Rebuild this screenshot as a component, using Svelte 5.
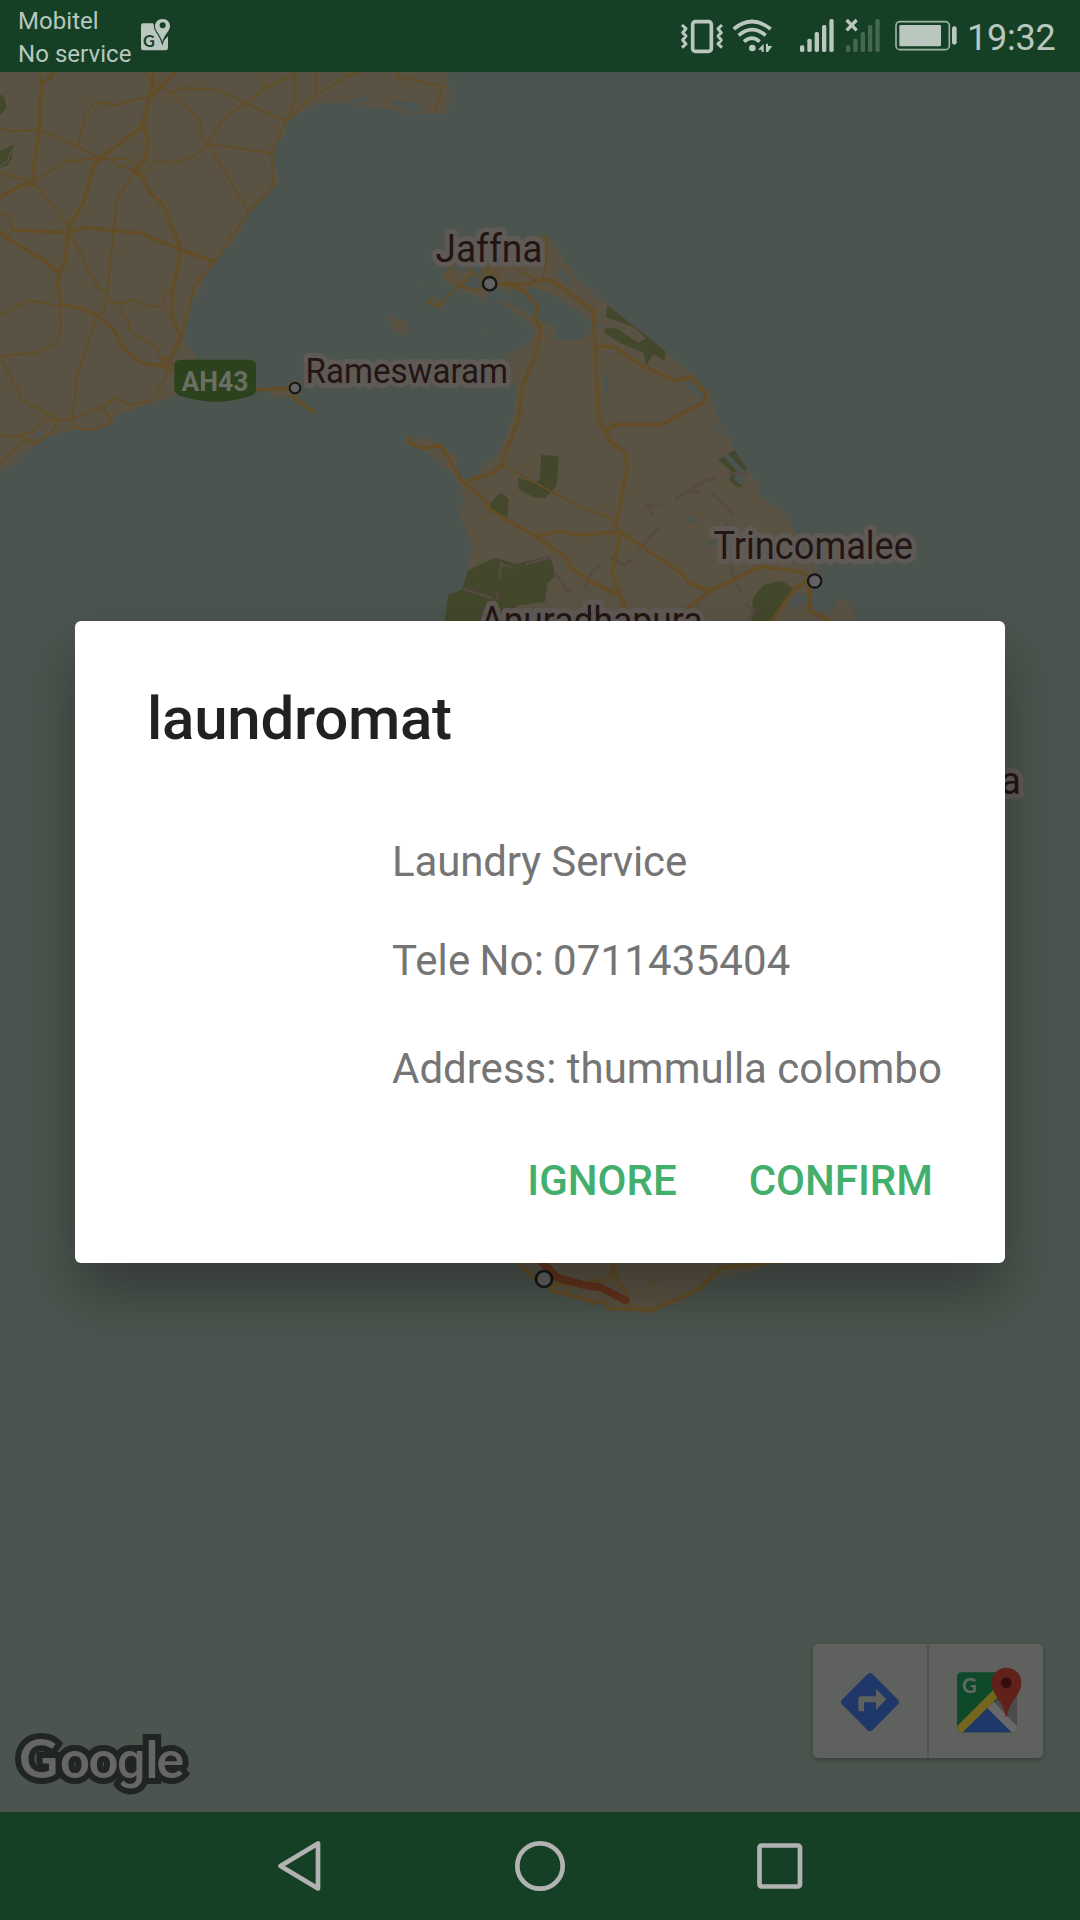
<script>
  // Road geometry, grouped by map tile. Each tile uses its own local units.
  const indiaMinor = [
    'M118 0L125 38', 'M0 172L30 184L112 179L235 229L300 266L385 266L412 292',
    'M235 225L254 138L284 97L348 105L425 83L447 88', 'M425 0L460 42L478 42L507 67L598 146L608 207L624 221L585 256L509 281L466 268L437 302L405 303L350 285L333 268',
    'M507 67L562 53L656 61L736 98L858 154', 'M624 221L666 150L736 98L795 56L885 12L882 0', 'M790 18L795 56',
    'M883 5L883 98L858 154L815 249L819 353L745 427L644 575L583 648L545 800', 'M858 154L918 98L946 78L1040 18L1085 5', 'M951 0L946 78', 'M1036 0L1040 18',
    'M1195 0L1190 20L1327 49L1306 131', 'M624 221L815 249', 'M624 221L745 427', 'M0 307L95 336L202 272L300 266', 'M95 336L116 355L205 465',
    'M0 428L26 434L38 478L22 502', 'M405 303L350 393L341 480L320 688L309 730L290 736L232 910L217 1046L222 1073L282 1080L337 1054L307 1010',
    'M208 492L253 568L266 606L280 622L291 650L320 669', 'M320 688L341 702L369 700L396 687L430 706L484 711L496 663L517 661', 'M369 700L365 730L381 740L388 780L430 807L476 843L486 880',
    'M0 736L84 691L182 708L183 772L170 824L97 850L0 857L68 992L175 1050L217 1046L307 1010L343 986L391 1005L457 992L500 914L520 902',
    'M175 1050L133 1050L99 1086L44 1102L0 1093', 'M175 1050L154 1088L107 1122L72 1104L14 1168L0 1175', 'M486 880L495 862L515 875L520 895L498 899'
  ];
  const indiaMajor = [
    'M165 0L145 28L125 38L118 180L95 336L98 343L65 344L0 382', 'M460 0L458 42L447 88L427 168L300 266L282 284L249 402L208 465L205 492L195 580L178 610L173 645L184 702L248 717L290 736L340 778L370 836L427 880L500 890L543 800L516 740L518 661L543 540L490 405L450 367L427 320L405 303L435 270L444 208L427 168',
    'M530 0L447 88', 'M38 480L205 488L249 473L425 490L543 540L644 575', 'M0 486L22 505L129 569L178 610', 'M767 959L880 955L882 984L944 1028'
  ];
  const lankaMinor = [
    'M228 155L198 190L240 228L298 243L308 220', 'M135 272L173 290L284 185', 'M484 80H502L495 180L480 240', 'M260 170L315 218L302 168', 'M315 218L326 115L330 218L350 168', 'M330 218L382 168',
    'M408 168L425 188L470 208', 'M364 765L460 815L590 887L680 918L712 955'
  ];
  const lankaMajor = [
    'M345 222L450 223L468 210H515L640 303L656 628L688 690L735 731L742 770L708 945L720 970L696 1093L730 1180V1240',
    'M380 222L435 245L474 293L465 325L484 355L467 433L427 530L414 632L363 764L336 790L248 817L182 706L131 715L88 700L90 680',
    'M248 817L315 868L331 900L465 978L560 1043L571 1070L630 1115L715 1155', 'M465 978L540 965L605 975L688 968L722 967L905 1090L928 1120L990 1143L1140 1070L1270 1086L1290 1110L1244 1135L1170 1240',
    'M990 1143L910 1205', 'M648 410H703L780 465L883 511L934 502L976 550L973 576L845 644H704L677 664', 'M1288 1125L1290 1202L1350 1232', 'M1306 1124H1325'
  ];
  const boundaries = [
    'M883 870L965 817L1010 803M930 845H962', 'M1045 790H1103', 'M998 850L1062 912', 'M848 886H803L822 920', 'M838 950L780 1018', 'M688 1040L733 1066L755 1048',
    'M660 1065L637 1085L612 1138', 'M520 1085L545 1112L558 1142L572 1144', 'M512 1042L437 1063', 'M398 1073L364 1062L358 1108M352 1145V1168', 'M250 1137L333 1163', 'M1053 1065L1058 1092L1080 1143M1040 940V1030', 'M1095 1182L1125 1200L1105 1232'
  ];
  const places = [
    { name: 'Jaffna', x: 435.5, y: 261.5, w: 107, size: 38 },
    { name: 'Rameswaram', x: 305.5, y: 382.5, w: 202.5, size: 35.5 },
    { name: 'Trincomalee', x: 713.5, y: 558.5, w: 199.5, size: 38 },
    { name: 'Anuradhapura', x: 480.5, y: 634, w: 222, size: 38 }
  ];
  const details = ['Laundry Service', 'Tele No: 0711435404', 'Address: thummulla colombo'];
  const bars = [
    { x: 420, y: 136 }, { x: 442, y: 116 }, { x: 464, y: 96 }, { x: 486, y: 75 }, { x: 508, y: 57 }
  ];
</script>

<div class="screen">
  <header class="status">
    <div class="carrier"><span>Mobitel</span><span>No service</span></div>
    <svg class="mapnote" viewBox="420 50 92 104" width="30.67" height="34.67">
      <path d="M429 69H459L487 125L504 108V143Q504 150 497 150H430Q423 150 423 143V76Q423 69 429 69Z" fill="#b9c7be" />
      <path d="M488 56C474 56 465 66 465 77C465 92 480 101 487 124C494 101 510 92 510 77C510 66 501 56 488 56Z" fill="#b9c7be" stroke="#154026" stroke-width="7" paint-order="stroke" />
      <circle cx="488" cy="75" r="9" fill="#154026" />
      <text x="429" y="140" class="g" font-size="49" fill="#154026">G</text>
    </svg>
    <div class="icons">
      <svg viewBox="60 0 132 216" width="44" height="72" fill="none" stroke="#b9c7be">
        <rect x="98" y="65" width="56" height="89" rx="8" stroke-width="11" />
        <path d="M66 75L78 86L68 98L78 108L68 120L78 132L66 143M186 75L174 86L184 98L174 108L184 120L174 132L186 143" stroke-width="9" stroke-linejoin="round" />
      </svg>
      <svg class="wifi" viewBox="216 0 126 216" width="42" height="72" fill="none" stroke="#b9c7be" stroke-width="11">
        <path d="M221 87Q276 42 332 87M236 106Q276 72 317 106M252 125Q276 104 299 125" />
        <circle cx="277" cy="144" r="10" fill="#b9c7be" stroke="none" />
        <path d="M294 149L311 131V156H305V149ZM318 131H324V138H337L324 156H318Z" fill="#b9c7be" stroke="none" />
      </svg>
      <svg class="sig" viewBox="414 0 114 216" width="38" height="72" fill="#b9c7be">
        {#each bars as b}<rect x={b.x} y={b.y} width="13" height={156 - b.y} rx="5" />{/each}
      </svg>
      <svg class="sig2" viewBox="552 0 114 216" width="38" height="72">
        <g transform="translate(138 0)" fill="#45684f">
          {#each bars as b}<rect x={b.x} y={b.y} width="13" height={156 - b.y} rx="5" />{/each}
        </g>
        <path d="M560 60L590 91M590 60L560 91" stroke="#b9c7be" stroke-width="10" />
      </svg>
      <svg class="battery" viewBox="702 0 192 216" width="64" height="72">
        <rect x="708" y="65" width="160" height="84" rx="12" fill="none" stroke="#9fb3a6" stroke-width="5" />
        <rect x="718" y="75" width="125" height="64" rx="4" fill="#b9c7be" />
        <rect x="876" y="79" width="14" height="55" rx="7" fill="#b9c7be" />
      </svg>
      <span class="time">19:32</span>
    </div>
  </header>

  <main class="map">
    <svg class="tiles" viewBox="0 72 1080 1740" width="1080" height="1740">
      <rect y="72" width="1080" height="1740" fill="#4b544e" />

      <!-- Tamil Nadu coast -->
      <g transform="translate(0 70) scale(.33333)">
        <path class="land" d="M0 0H1343L1350 113L1325 131L1220 129L1100 108L1040 101L1000 98L945 102L930 118L905 125L880 140L858 160V190L835 215L820 255L826 305L843 330L815 360L745 430L727 480L640 580L612 625L600 665L575 690L560 780L548 800L570 835L593 868L600 960L540 975L455 1000L348 1038L338 1062L290 1080L235 1078L155 1095L100 1130L0 1210Z" />
        <path class="sea" d="M1040 97L1065 83L1105 78L1095 90L1070 95L1060 105ZM1172 96L1200 93L1240 98L1272 112V126L1225 124ZM104 1104L112 1084L130 1094L120 1104ZM532 845L545 865H530Z" />
        <path class="park" d="M0 75L12 77L20 115L0 135ZM0 242L42 224L35 268L22 286L0 294Z" />
        <path d="M38 236L22 274L0 290" fill="none" stroke="#5a5344" stroke-width="4" />
        <path class="land" d="M1165 733L1195 748L1221 752V790L1215 798L1175 772ZM1258 645L1272 635L1266 650ZM812 962H850L870 930L900 928L903 975L880 983L812 979Z" />
        <g class="road minor">{#each indiaMinor as d}<path {d} />{/each}</g>
        <g class="road major">{#each indiaMajor as d}<path {d} />{/each}</g>
        <path d="M541 869H750Q768 869 768 887V960Q768 972 754 977Q700 995 646 996Q592 993 538 977Q523 970 523 958V887Q523 869 541 869Z" fill="#2c421c" />
        <circle cx="885" cy="954" r="16" class="town" stroke-width="6" />
      </g>

      <!-- Northern Sri Lanka -->
      <g transform="translate(380 210) scale(.33333)">
        <path class="land" d="M470 80L500 76L512 88L560 160L610 225L680 280L765 350L858 425L940 495L990 555L1010 620L1060 710L1100 775L1140 830L1135 850L1185 895L1197 885L1250 970L1315 1060L1312 1132L1292 1140L1300 1200L1345 1212L1365 1195V1178L1395 1165L1420 1195L1430 1260V1300H190L205 1155L245 1140L265 1080L275 1000L240 925L250 860L225 800L180 760L130 720L65 695L80 683L140 688L190 705L235 750L225 770L255 810L300 790L305 770L350 735L372 690L405 600L410 525L380 510L390 450L370 437L435 408L465 370L440 337L360 277L358 268L400 285L440 310L495 335L535 360L520 368L530 378L515 383L555 393L600 388L630 370L635 345L600 305L540 265L450 230L440 245L390 232L400 258L350 228L312 262L303 273L280 257L240 240L188 210L190 190L205 180L280 185L250 225L300 238L310 205L330 165L420 140Z" />
        <path class="land" d="M140 270L155 260L195 275L192 296L170 290ZM118 225L130 217L127 228ZM314 373L323 375L320 380Z" />
        <path class="sea" d="M528 178L540 176L572 205L570 228L555 220ZM668 495L688 490L680 510L690 565L675 545ZM912 530L930 508L970 545L973 570ZM992 650L1010 640L1028 665L1025 685L1005 662ZM635 335L675 350L650 355ZM915 935L930 918L948 930L945 942L930 935ZM978 990L1010 992L985 1018ZM1225 1180L1245 1150L1285 1155L1280 1180L1260 1178L1250 1205Z" />
        <path class="park" d="M682 285L765 350L858 425L853 453L820 433L797 467L792 430L715 395L672 367L675 355L710 355L775 398L798 385L760 350L678 322ZM483 735L537 738L530 828L495 863H463L418 840L414 803L465 820L480 805ZM360 848L386 866L383 925L330 893V882ZM205 1155L245 1140L265 1080L345 1043L410 1062L508 1037L520 1070L525 1098L502 1120L495 1175L410 1187L400 1240H193ZM1115 1240L1118 1165L1150 1125L1205 1112L1240 1135L1170 1240ZM1015 750L1062 720L1100 775L1085 830L1075 833L1048 812L1055 785Z" />
        <path class="sea" d="M1030 740L1045 732L1085 775L1100 785L1095 815L1080 825L1062 805L1070 785L1055 765Z" />
        <g fill="none" stroke="#564a43" stroke-width="8">{#each boundaries as d}<path {d} />{/each}</g>
        <g class="road minor">{#each lankaMinor as d}<path {d} />{/each}</g>
        <g class="road major">{#each lankaMajor as d}<path {d} />{/each}</g>
        <circle cx="329" cy="221" r="20" class="town" stroke-width="7" />
        <circle cx="1304" cy="1113" r="20" class="town" stroke-width="7" />
      </g>

      <!-- Southern coast -->
      <g transform="translate(480 1230) scale(.33333)">
        <path class="land" d="M90 80H950L900 99L820 120L700 150L660 180L610 210L595 222L565 225L510 245L490 256L470 243L385 240L370 215L345 222L220 190L190 160Z" />
        <path class="sea" d="M265 195L270 175L300 192Z" />
        <g class="road major">
          <path d="M105 95L180 160L210 170L220 187L265 192L345 220L370 212L388 237H470L512 241L610 200L660 177L725 112L900 95" />
          <path d="M404 90L390 147L330 158L215 165M398 108L418 165L437 185L448 237M267 165L265 192M518 156L526 164" />
        </g>
        <path d="M180 90L230 142L312 165L362 172L437 211" fill="none" stroke="#63321c" stroke-width="23" stroke-linecap="round" stroke-linejoin="round" />
        <circle cx="192" cy="147" r="24" class="town" stroke-width="8" />
      </g>

      <text x="181.500" y="390.500" class="shield" textLength="67" lengthAdjust="spacingAndGlyphs">AH43</text>
      {#each places as p}
        <text class="label" x={p.x} y={p.y} font-size={p.size} textLength={p.w} lengthAdjust="spacingAndGlyphs">{p.name}</text>
      {/each}
      <text class="label" x="1021" y="794" font-size="38" text-anchor="end">a</text>

      <g class="google" transform="translate(0 1777.500)">
        {#each ['back', 'front'] as layer}
          <text class={layer} y="0"><tspan x="19" font-size="54">G</tspan><tspan x="60">o</tspan><tspan x="88.500">o</tspan><tspan x="117" class="gee">g</tspan><tspan x="145.500">l</tspan><tspan x="156.500">e</tspan></text>
        {/each}
      </g>
    </svg>

    <div class="tools">
      <div class="tool">
        <svg viewBox="150 155 180 180" width="60" height="60">
          <path d="M233 161Q240 155 247 161L324 238Q330 245 324 252L247 330Q240 336 233 330L156 252Q150 245 156 238Z" fill="#1f3869" />
          <path d="M205 273V236Q205 228 213 228H258V206L289 237L258 268V246H222V273Z" fill="#5f615f" />
        </svg>
      </div>
      <div class="tool gmaps">
        <svg viewBox="498 140 200 200" width="66.67" height="66.67">
          <path d="M516 156H681V320Q681 336 665 336H516Q501 336 501 321V171Q501 156 516 156Z" fill="#0e4a2a" />
          <path d="M591 263L681 190V321Q681 336 666 336Z" fill="#4a4b4a" />
          <path d="M591 263L611 244L681 318Q681 336 664 336Z" fill="#696769" />
          <path d="M640 156H690V200H640Z" fill="#5f615f" />
          <path d="M591 263L664 336H518Z" fill="#1f3869" />
          <path d="M501 318L612 207L630 225L518 336Q501 336 501 318Z" fill="#75651f" />
          <path d="M649 142C623 142 605 162 605 187C605 225 642 243 647 288Q649 293 651 288C656 243 694 225 694 187C694 162 675 142 649 142Z" fill="#612019" />
          <circle cx="649" cy="187" r="16" fill="#320f0c" />
          <text x="516" y="218" class="g" font-size="61" fill="#656966">G</text>
        </svg>
      </div>
    </div>
  </main>

  <nav class="nav">
    <svg viewBox="0 0 50 56" width="50" height="56"><path d="M43 5.500V50.500L5.500 28Z" /></svg>
    <svg viewBox="0 0 56 56" width="56" height="56"><circle cx="28" cy="28" r="22.700" /></svg>
    <svg viewBox="0 0 50 56" width="50" height="56"><rect x="4.500" y="7.500" width="40.500" height="41" rx="2" /></svg>
  </nav>

  <section class="dialog" role="dialog" aria-label="laundromat">
    <h1>laundromat</h1>
    <div class="details">
      {#each details as line}<p>{line}</p>{/each}
    </div>
    <div class="actions"><button>IGNORE</button><button>CONFIRM</button></div>
  </section>
</div>

<style>
  :global(body) { margin: 0; background: #4b544e; }
  .screen { position: relative; width: 1080px; height: 1920px; display: flex; flex-direction: column; overflow: hidden; font-family: Roboto, sans-serif; }
  svg { display: block; flex: none; }

  .status { height: 72px; flex: none; display: flex; background: #154026; color: #b9c7be; }
  .carrier { display: flex; flex-direction: column; width: 122px; padding: 5px 0 0 18px; font-size: 24px; line-height: 33px; letter-spacing: .05px; white-space: nowrap; }
  .mapnote { margin-top: 16.670px; }
  .g { font-family: Lato, sans-serif; font-weight: 700; }
  .icons { display: flex; margin-left: auto; width: 400px; }
  .wifi { margin-left: 8px; }
  .sig { margin-left: 24px; }
  .sig2 { margin-left: 8px; }
  .battery { margin-left: 12px; }
  .time { margin-left: 9px; font-size: 36px; line-height: 76px; letter-spacing: -.2px; }

  .map { position: relative; flex: 1; }
  .land { fill: #5a5344; }
  .sea { fill: #4b544e; }
  .park { fill: #43482c; }
  .road { fill: none; stroke: #634d27; stroke-linejoin: round; }
  .minor { stroke-width: 6; }
  .major { stroke-width: 11; }
  .town { fill: #626262; stroke: #161616; }
  .label { fill: #231514; stroke: #5f5a55; stroke-width: 10px; paint-order: stroke; stroke-linejoin: round; }
  .shield { font-size: 27px; font-weight: 700; fill: #696f63; }
  .google { font-family: Lato, sans-serif; font-weight: 700; font-size: 52px; }
  .gee { font-family: Roboto, sans-serif; font-weight: 500; font-size: 50px; }
  .back { fill: #202523; stroke: #202523; stroke-width: 12px; }
  .front { fill: #666; }

  .tools { position: absolute; right: 37px; bottom: 54px; display: flex; width: 230px; height: 114px; border-radius: 5px; background: #5f615f; box-shadow: 0 2px 5px rgba(0, 0, 0, .25); }
  .tool { box-sizing: border-box; width: 114px; display: flex; align-items: center; justify-content: center; }
  .tool svg { margin-top: 1px; }
  .gmaps { width: 116px; border-left: 2px solid #535553; padding-left: 6.670px; }
  .gmaps svg { margin-top: -2px; }

  .nav { height: 108px; flex: none; display: flex; align-items: center; justify-content: center; gap: 187px; background: #154026; }
  .nav svg { fill: none; stroke: #b2b2b2; stroke-width: 4.700; stroke-linejoin: round; }

  .dialog { position: absolute; left: 75px; top: 621px; width: 930px; height: 642px; box-sizing: border-box; padding: 63px 64px 0 72px; border-radius: 6px; background: #fff; box-shadow: 0 30px 60px rgba(0, 0, 0, .3); }
  h1 { margin: 0; font-size: 60px; line-height: 70px; font-weight: 500; letter-spacing: -.25px; color: #212121; }
  .details { display: flex; flex-direction: column; padding: 83px 0 0 245px; color: #757575; }
  p { margin: 0; font-size: 42px; line-height: 50px; white-space: nowrap; }
  p:nth-child(1) { letter-spacing: -.13px; }
  p:nth-child(2) { margin-top: 49px; letter-spacing: .15px; word-spacing: -1.500px; }
  p:nth-child(3) { margin-top: 58px; }
  .actions { display: flex; justify-content: flex-end; gap: 72px; margin-top: 62px; padding-right: 8px; }
  button { padding: 0; border: 0; background: none; font: 500 42px/50px Roboto, sans-serif; color: #43af6c; }
</style>
